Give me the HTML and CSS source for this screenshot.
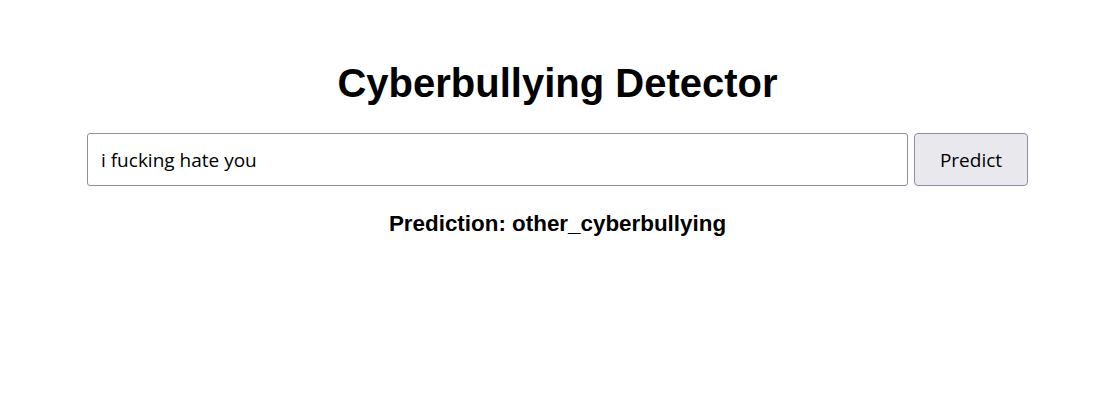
FILE: index.html
```html
<!DOCTYPE html>
<html>
<head>
<meta charset="utf-8">
<link rel="stylesheet" href="styles.css">
</head>
<body>
<div class="app">
  <h1 class="title">Cyberbullying Detector</h1>
  <form class="form">
    <input class="text-input" type="text" value="i fucking hate you">
    <button class="predict-btn" type="button">Predict</button>
  </form>
  <h3 class="result">Prediction: other_cyberbullying</h3>
</div>
</body>
</html>
```

FILE: styles.css
```css
html, body {
  margin: 0;
  padding: 0;
  background: #ffffff;
}
body {
  font-family: "Liberation Sans", Arial, sans-serif;
  color: #000;
}
.app {
  display: flex;
  flex-direction: column;
  align-items: center;
  padding-top: 58px;
  padding-left: 3px;
}
.title {
  margin: 0;
  font-size: 40px;
  font-weight: bold;
  line-height: 50px;
}
.form {
  display: flex;
  gap: 6px;
  margin-top: 25px;
}
.text-input {
  box-sizing: border-box;
  width: 821px;
  height: 53px;
  padding: 0 13px;
  border: 1px solid #8f8f9d;
  border-radius: 3px;
  font-family: "Open Sans", sans-serif;
  font-size: 19px;
  color: #000;
  background: #fff;
  outline: none;
}
.predict-btn {
  box-sizing: border-box;
  width: 114px;
  height: 53px;
  border: 1px solid #8f8f9d;
  border-radius: 4px;
  background: #e9e9ed;
  font-family: "Open Sans", sans-serif;
  font-size: 19px;
  color: #000;
}
.result {
  margin: 23px 0 0;
  font-size: 22.4px;
  font-weight: bold;
  line-height: 30px;
}
```
